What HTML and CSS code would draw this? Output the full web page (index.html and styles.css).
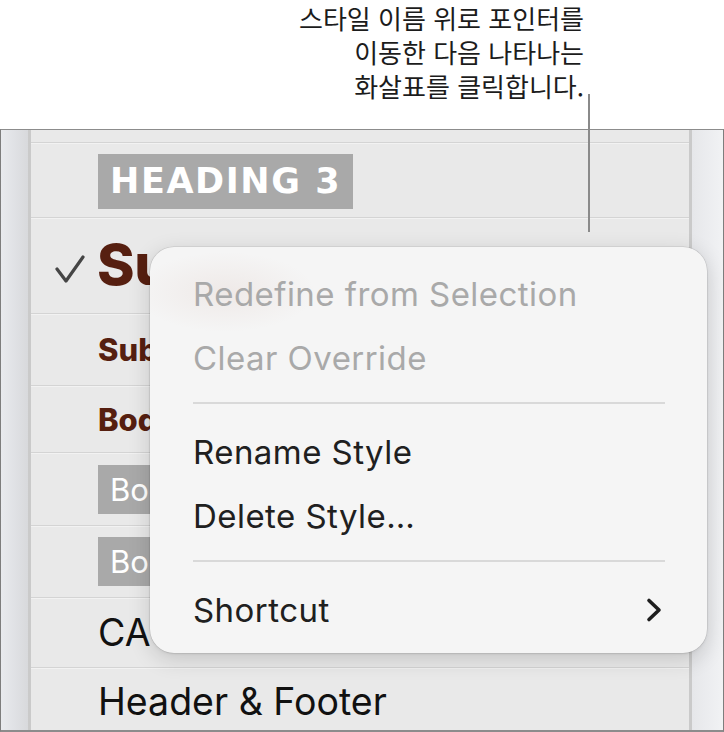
FILE: index.html
```html
<!DOCTYPE html>
<html lang="ko">
<head>
<meta charset="utf-8">
<link rel="stylesheet" href="styles.css">
</head>
<body>
<div class="page">
  <div class="caption">
    <p class="caption-text">스타일 이름 위로 포인터를<br>이동한 다음 나타나는<br>화살표를 클릭합니다.</p>
    <span class="leader"></span>
  </div>
  <div class="frame">
    <div class="strip strip-left"></div>
    <div class="divider"></div>
    <div class="list">
      <div class="row row-top"></div>
      <div class="row row-h3"><span class="h3-box">HEADING 3</span></div>
      <div class="row row-sub">
        <svg class="check" width="30" height="30" viewBox="0 0 30 30"><path d="M2 15 L11 27 L28 3" fill="none" stroke="#454545" stroke-width="3.2" stroke-linecap="round" stroke-linejoin="round"/></svg>
        <span class="clip clip-big"><span class="subtitle-big">Subtitle</span></span>
      </div>
      <div class="row row-sul"><span class="clip"><span class="brown-small">Subtitle</span></span></div>
      <div class="row row-boo"><span class="clip"><span class="brown-small">Body</span></span></div>
      <div class="row row-box"><span class="clip clip-box"><span class="gray-box">Body</span></span></div>
      <div class="row row-box2"><span class="clip clip-box"><span class="gray-box">Body</span></span></div>
      <div class="row row-ca"><span class="clip"><span class="plain">CAPTION</span></span></div>
      <div class="row row-hf"><span class="plain">Header &amp; Footer</span></div>
    </div>
    <div class="divider"></div>
    <div class="strip strip-right"></div>
  </div>
  <div class="menu">
    <div class="item disabled">Redefine from Selection</div>
    <div class="item disabled">Clear Override</div>
    <div class="sep"></div>
    <div class="item">Rename Style</div>
    <div class="item">Delete Style…</div>
    <div class="sep"></div>
    <div class="item item-sub">Shortcut
      <svg class="chev" width="18" height="26" viewBox="0 0 18 26"><path d="M4 3.5 L14 13 L4 22.5" fill="none" stroke="#1e1e1e" stroke-width="3.6" stroke-linecap="round" stroke-linejoin="round"/></svg>
    </div>
  </div>
</div>
</body>
</html>
```

FILE: styles.css
```css
* { box-sizing: border-box; }
html, body { margin: 0; padding: 0; background: #ffffff; }
body { width: 724px; height: 732px; overflow: hidden; font-family: "Inter", "Liberation Sans", sans-serif; }

.page { position: relative; width: 724px; height: 732px; }

.caption { height: 129px; position: relative; }
.caption-text {
  margin: 0;
  position: absolute;
  right: 140px;
  top: 1px;
  text-align: right;
  font-family: "Noto Sans CJK KR", "Noto Sans", sans-serif;
  font-size: 26px;
  line-height: 34px;
  color: #1c1c1c;
}
.leader {
  position: absolute;
  left: 588px;
  top: 94px;
  width: 1.5px;
  height: 138px;
  background: #8a8a8a;
  z-index: 3;
}

.frame {
  display: grid;
  grid-template-columns: 27px 3px 658px 3px 31px;
  height: 603px;
  border-top: 1px solid #8c8c8c;
  border-left: 1px solid #7d7d7d;
  border-right: 1px solid #7d7d7d;
  border-bottom: 2px solid #8c8c8c;
  background: #e8e8e8;
}
.strip-left { background: linear-gradient(to right, #e8eaee, #d8d9dc); }
.strip-right { background: linear-gradient(to right, #e6e7ea, #f1f2f4); }
.divider { background: #cacaca; }

.list { display: flex; flex-direction: column; background: #e9e9e9; overflow: hidden; }
.row {
  flex: none;
  display: flex;
  align-items: center;
  padding-left: 67px;
  border-bottom: 1px solid #d4d4d4;
  box-shadow: 0 1px 0 #f2f2f2;
}
.row-top { height: 13px; }
.row-h3 { height: 75px; }
.row-sub { height: 96px; padding-left: 24px; }
.row-sul { height: 72px; }
.row-boo { height: 67px; }
.row-box { height: 73px; }
.row-box2 { height: 72px; }
.row-ca { height: 70px; }
.row-hf { flex: 1; border-bottom: none; box-shadow: none; }

.clip { display: block; width: 52px; overflow: hidden; white-space: nowrap; }
.clip-big { width: 58px; }
.clip-box { width: 60px; }

.h3-box {
  background: #a9a9a9;
  color: #ffffff;
  font-family: "DejaVu Sans", sans-serif;
  font-weight: 700;
  font-size: 35px;
  letter-spacing: 1.6px;
  line-height: 55px;
  height: 55px;
  padding: 0 12px 0 12px;
  margin-top: 2px;
}

.check { flex: none; margin-right: 12px; margin-top: 6px; }
.subtitle-big {
  font-weight: 800;
  font-size: 57px;
  color: #561f10;
  letter-spacing: -0.5px;
  display: inline-block;
  margin-top: -2px;
}
.brown-small {
  font-weight: 800;
  font-size: 31px;
  color: #561f10;
}
.gray-box {
  display: inline-block;
  background: #a9a9a9;
  color: #ffffff;
  font-size: 31px;
  line-height: 49px;
  height: 49px;
  padding: 0 12px;
  width: 160px;
}
.plain { font-size: 37.5px; color: #111111; }
.row-hf .plain { margin-top: 4px; }

.menu {
  position: absolute;
  left: 150px;
  top: 247px;
  width: 557px;
  height: 406px;
  border-radius: 24px;
  background: #f5f5f5;
  background-image: radial-gradient(ellipse 90px 40px at 75px 45px, rgba(210, 180, 170, 0.18), rgba(245,245,245,0));
  box-shadow: 0 0 0 0.5px rgba(0,0,0,0.12), 0 6px 22px rgba(0,0,0,0.16), 0 1px 3px rgba(0,0,0,0.08);
  padding: 15px 42px 11px 43px;
  display: flex;
  flex-direction: column;
  z-index: 2;
}
.item {
  height: 64px;
  flex: none;
  display: flex;
  align-items: center;
  font-size: 33px;
  letter-spacing: 0.45px;
  color: #202020;
}
.item.disabled { color: #a9a9a9; }
.item-sub { justify-content: space-between; }
.chev { margin-right: 2px; }
.sep {
  flex: none;
  height: 30px;
  position: relative;
}
.sep::after {
  content: "";
  position: absolute;
  left: 0; right: 0;
  top: 12px;
  height: 1.5px;
  background: #d9d9d9;
}
```
